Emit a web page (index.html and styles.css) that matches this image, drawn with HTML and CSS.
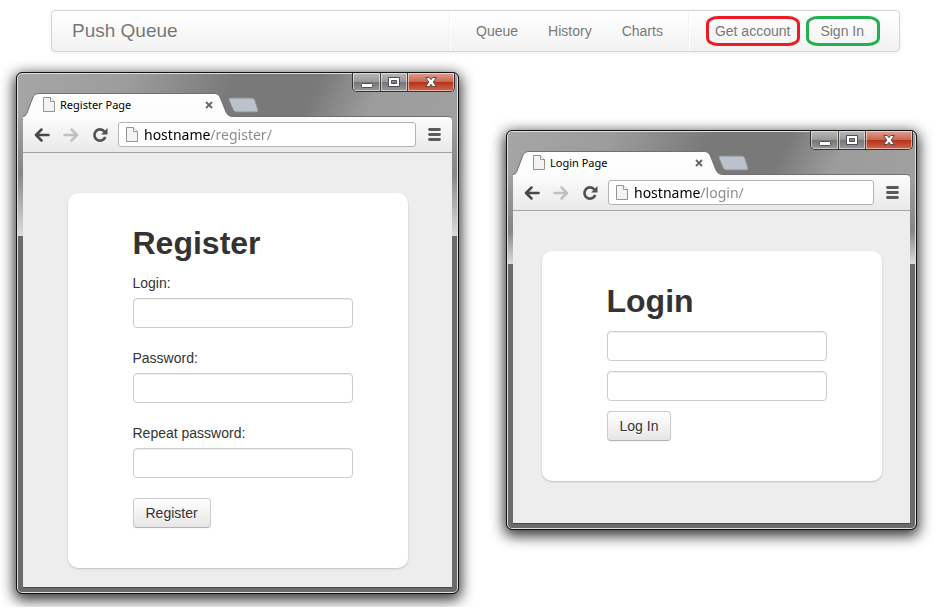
FILE: index.html
```html
<!DOCTYPE html>
<html lang="en">
<head>
<meta charset="utf-8">
<title>Push Queue</title>
<link rel="stylesheet" href="styles.css">
</head>
<body>
<svg class="defs" aria-hidden="true">
  <defs>
    <linearGradient id="tabFill" x1="0" y1="0" x2="0" y2="1"><stop offset="0" stop-color="#fff"/><stop offset="1" stop-color="#fcfcfc"/></linearGradient>
    <symbol id="doc" viewBox="0 0 12 15">
      <path d="M.5 .5H7.5L11.500 4.500V14.500H.5Z" fill="#f3f3f3" stroke="#949494"/>
      <path d="M7.500 .5V4.500H11.500" fill="#fff" stroke="#949494"/>
    </symbol>
    <symbol id="tab" viewBox="0 0 212 26">
      <path d="M0 26V24Q3 23 4 20L10 4Q11.500 .5 15 .5H192Q195.500 .5 197 4L203 19Q205 23.500 210 23.500H212V26Z" fill="url(#tabFill)"/>
      <path d="M0 23.500Q3 23 4 20L10 4Q11.500 .5 15 .5H192Q195.500 .5 197 4L203 19Q205 23.500 210 23.500H212" fill="none" stroke="#707070"/>
    </symbol>
    <symbol id="newtab" viewBox="0 0 32 16">
      <path d="M3 1H25Q27 1 28 3.500L31 13Q31.500 15 29.500 15H9Q7 15 6 12.500L2 3Q1.500 1 3 1Z" fill="#bcc2cb" stroke="#8b8e93"/>
    </symbol>
    <symbol id="cross" viewBox="0 0 8 8"><path d="M1 1L7 7M7 1L1 7" stroke="#666" stroke-width="1.800"/></symbol>
    <symbol id="arrow" viewBox="0 0 16 14"><path d="M7.500 1.500L2 7L7.500 12.500M2.500 7H14.500" fill="none" stroke="currentColor" stroke-width="2.500" stroke-linecap="round" stroke-linejoin="round"/></symbol>
    <symbol id="reload" viewBox="0 0 16 16">
      <path d="M12.400 4.500A5.600 5.600 0 1 0 13.300 10" fill="none" stroke="#525252" stroke-width="2.700"/>
      <path d="M15.500 1V7.500H9Z" fill="#525252"/>
    </symbol>
    <symbol id="bars" viewBox="0 0 13 13"><path d="M1.500 1.500H11.500M1.500 6.500H11.500M1.500 11.500H11.500" stroke="#5a5a5a" stroke-width="2.800" stroke-linecap="round"/></symbol>
    <symbol id="min" viewBox="0 0 12 11"><rect x=".5" y="6.500" width="11" height="4" rx="1" fill="#fff" stroke="#4b4e61"/></symbol>
    <symbol id="max" viewBox="0 0 12 11"><path fill-rule="evenodd" d="M.5 .5H11.500V9.500H.5ZM3.500 3.500V6.500H8.500V3.500Z" fill="#fff" stroke="#4b4e61"/></symbol>
    <symbol id="close" viewBox="0 0 12 11"><path d="M.7 .5H4.300L6 2.700L7.700 .5H11.300L8.200 5L11.300 9.500H7.700L6 7.300L4.300 9.500H.7L3.800 5Z" fill="#fff" stroke="#5a4a55"/></symbol>
  </defs>
</svg>

<header class="navbar">
  <a class="brand" href="#">Push Queue</a>
  <nav class="nav">
    <a href="#">Queue</a>
    <a href="#">History</a>
    <a href="#">Charts</a>
  </nav>
  <nav class="nav">
    <a class="ring ring-red" href="#register">Get account</a>
    <a class="ring ring-green" href="#login">Sign In</a>
  </nav>
</header>

<main class="desktop">
  <section class="window" id="register">
    <div class="titlebar">
      <div class="tab">
        <svg class="tab-shape"><use href="#tab"/></svg>
        <svg class="doc"><use href="#doc"/></svg>
        <span class="tab-title">Register Page</span>
        <button class="icon-button" type="button" aria-label="Close tab"><svg class="cross"><use href="#cross"/></svg></button>
      </div>
      <button class="icon-button newtab" type="button" aria-label="New tab"><svg><use href="#newtab"/></svg></button>
      <div class="controls">
        <button type="button" aria-label="Minimize"><svg><use href="#min"/></svg></button>
        <button type="button" aria-label="Maximize"><svg><use href="#max"/></svg></button>
        <button class="close" type="button" aria-label="Close"><svg><use href="#close"/></svg></button>
      </div>
    </div>
    <div class="toolbar">
      <button class="icon-button" type="button" aria-label="Back"><svg class="arrow"><use href="#arrow"/></svg></button>
      <button class="icon-button" type="button" aria-label="Forward"><svg class="arrow forward"><use href="#arrow"/></svg></button>
      <button class="icon-button" type="button" aria-label="Reload"><svg class="reload"><use href="#reload"/></svg></button>
      <div class="address">
        <svg class="doc"><use href="#doc"/></svg>
        <input type="text" aria-label="Address" value="hostname/register/">
      </div>
      <button class="icon-button" type="button" aria-label="Menu"><svg class="bars"><use href="#bars"/></svg></button>
    </div>
    <div class="page">
      <form class="card labelled">
        <h2>Register</h2>
        <label for="reg-login">Login:</label>
        <input id="reg-login" type="text">
        <label for="reg-pass">Password:</label>
        <input id="reg-pass" type="password">
        <label for="reg-repeat">Repeat password:</label>
        <input id="reg-repeat" type="password">
        <button type="button">Register</button>
      </form>
    </div>
  </section>

  <section class="window window-login" id="login">
    <div class="titlebar">
      <div class="tab">
        <svg class="tab-shape"><use href="#tab"/></svg>
        <svg class="doc"><use href="#doc"/></svg>
        <span class="tab-title">Login Page</span>
        <button class="icon-button" type="button" aria-label="Close tab"><svg class="cross"><use href="#cross"/></svg></button>
      </div>
      <button class="icon-button newtab" type="button" aria-label="New tab"><svg><use href="#newtab"/></svg></button>
      <div class="controls">
        <button type="button" aria-label="Minimize"><svg><use href="#min"/></svg></button>
        <button type="button" aria-label="Maximize"><svg><use href="#max"/></svg></button>
        <button class="close" type="button" aria-label="Close"><svg><use href="#close"/></svg></button>
      </div>
    </div>
    <div class="toolbar">
      <button class="icon-button" type="button" aria-label="Back"><svg class="arrow"><use href="#arrow"/></svg></button>
      <button class="icon-button" type="button" aria-label="Forward"><svg class="arrow forward"><use href="#arrow"/></svg></button>
      <button class="icon-button" type="button" aria-label="Reload"><svg class="reload"><use href="#reload"/></svg></button>
      <div class="address">
        <svg class="doc"><use href="#doc"/></svg>
        <input type="text" aria-label="Address" value="hostname/login/">
      </div>
      <button class="icon-button" type="button" aria-label="Menu"><svg class="bars"><use href="#bars"/></svg></button>
    </div>
    <div class="page">
      <form class="card">
        <h2>Login</h2>
        <input type="text" aria-label="Login">
        <input type="password" aria-label="Password">
        <button type="button">Log In</button>
      </form>
    </div>
  </section>
</main>
</body>
</html>
```
FILE: styles.css
```css
* { box-sizing: border-box; }

body {
  margin: 0;
  background: #fff;
  color: #333;
  font: 14px/20px "Liberation Sans", Arial, sans-serif;
}

svg { display: block; }
.defs { position: absolute; width: 0; height: 0; }

/* Navigation bar */
.navbar {
  display: flex;
  margin: 10px 50px 0 51px;
  padding: 0 20px;
  border: 1px solid #d4d4d4;
  border-radius: 4px;
  background: linear-gradient(#fff, #f2f2f2);
  box-shadow: 0 1px 4px rgba(0, 0, 0, .067);
}
.navbar a {
  color: #777;
  text-decoration: none;
  text-shadow: 0 1px 0 #fff;
}
.navbar .brand {
  margin-right: auto;
  padding: 10px 0;
  font-size: 19px;
}
.nav {
  display: flex;
  padding-left: 11px;
  border-left: 1px solid #f2f2f2;
  box-shadow: inset 1px 0 #fff;
}
.nav:last-child { margin-left: 10px; }
.nav a {
  position: relative;
  padding: 10px 15px;
}
.ring::after {
  content: "";
  position: absolute;
  top: 5px;
  bottom: 5px;
  border: 3px solid;
  border-radius: 12px / 8px;
}
.ring-red::after { left: 6px; right: 5px; border-color: #ed1c24; }
.ring-green::after { left: 1px; right: -1px; border-color: #22b14c; }

/* Browser windows */
.desktop {
  display: grid;
  grid-template-columns: 443fr 411fr;
  align-items: start;
  gap: 47px;
  padding: 20px 33px 13px 16px;
  overflow: hidden;
}
.window {
  --glass: 163px;
  padding: 0 6px 6px;
  border: 1px solid #111;
  border-radius: 6px;
  background:
    linear-gradient(115deg, #a6a6a6, #9c9c9c 25%, #797979 48%, #797979 66%, #9c9c9c 80%, #a0a0a0) 0 0 / 100% 45px no-repeat,
    linear-gradient(#a0a0a0 45px, #858585 100px, #dcdcdc) 0 0 / 100% var(--glass) no-repeat,
    #6b6b6b;
  box-shadow: inset 0 0 0 1px #dedede, 0 4px 14px 2px rgba(0, 0, 0, .8);
}
.window-login { --glass: 133px; margin-top: 58px; }

.titlebar {
  display: flex;
  align-items: flex-end;
  height: 43px;
}
.tab {
  position: relative;
  display: flex;
  align-items: center;
  width: 206px;
  height: 23px;
  padding: 0 16px 0 20px;
}
.tab-shape {
  position: absolute;
  left: 0;
  top: 0;
  z-index: 1;
  width: 212px;
  height: 26px;
}
.tab > :not(.tab-shape) { position: relative; z-index: 2; }
.doc { flex: none; width: 12px; height: 15px; }
.tab-title {
  flex: 1;
  margin-left: 5px;
  color: #000;
  font: 11px/16px "Noto Sans", "Open Sans", sans-serif;
}
.cross { width: 8px; height: 8px; }
.icon-button {
  flex: none;
  padding: 0;
  border: 0;
  background: none;
}
.newtab { margin: 0 0 3px -2px; }
.newtab svg { width: 32px; height: 16px; }

.controls {
  display: flex;
  align-self: flex-start;
  margin: 0 -3px 0 auto;
  border: 1px solid #333;
  border-top: 0;
  border-radius: 0 0 5px 5px;
  overflow: hidden;
}
.controls button {
  display: flex;
  justify-content: center;
  align-items: center;
  width: 28px;
  height: 18px;
  padding: 0;
  border: 0;
  border-right: 1px solid #444;
  background: linear-gradient(#b8b8b8, #999 48%, #757575 50%, #999);
  box-shadow: inset 0 0 0 1px rgba(255, 255, 255, .5);
}
.controls button + button { width: 27px; }
.controls .close:last-child {
  width: 46px;
  border-right: 0;
  background: linear-gradient(#dda092, #cc6650 48%, #b4301a 50%, #d1674c);
}
.controls svg { width: 12px; height: 11px; }

.toolbar {
  display: flex;
  align-items: center;
  height: 37px;
  padding: 0 11px;
  border-top: 1px solid #707070;
  border-bottom: 1px solid #a3a3a3;
  border-radius: 4px 4px 0 0;
  background: linear-gradient(#fcfcfc, #e9e9e9);
}
.toolbar .icon-button { margin-right: 13px; }
.toolbar .icon-button:last-child { margin: 0 0 0 12px; }
.arrow { width: 16px; height: 14px; color: #484848; }
.forward { color: #c0c0c0; transform: scaleX(-1); }
.reload { width: 16px; height: 16px; }
.bars { width: 13px; height: 13px; }
.address {
  display: flex;
  flex: 1;
  align-items: center;
  min-width: 0;
  height: 25px;
  margin-left: -3px;
  padding: 0 7px;
  border: 1px solid #b4b4b4;
  border-radius: 3px;
  background: #fff;
}
.address input {
  flex: 1;
  min-width: 0;
  margin-left: 6px;
  padding: 0;
  border: 0;
  outline: 0;
  background: linear-gradient(90deg, #000 66px, #888 66px);
  background-clip: text;
  -webkit-background-clip: text;
  color: transparent;
  font: 14px/22px "Noto Sans", "Open Sans", sans-serif;
}

/* Pages inside the windows */
.page {
  padding: 40px 0 19px;
  background: #ededed;
  box-shadow: 0 1px #484848;
}
.window-login .page { padding-bottom: 42px; }
.card {
  display: flex;
  flex-direction: column;
  align-items: flex-start;
  gap: 10px;
  width: 340px;
  max-width: 100%;
  margin: 0 auto;
  padding: 30px 55px 40px 65px;
  border-radius: 10px;
  background: #fff;
  box-shadow: 0 1px 2px rgba(0, 0, 0, .2);
}
.card h2 {
  margin: 0;
  font-size: 32px;
  line-height: 40px;
}
.card input {
  width: 100%;
  height: 30px;
  padding: 4px 6px;
  border: 1px solid #ccc;
  border-radius: 4px;
  background: #fff;
  box-shadow: inset 0 1px 1px rgba(0, 0, 0, .075);
  font: inherit;
}
.labelled { gap: 0; }
.labelled h2 { margin-bottom: 10px; }
.labelled label { margin-bottom: 5px; }
.labelled input { margin-bottom: 20px; }
.card button {
  height: 30px;
  padding: 4px 12px;
  border: 1px solid #ccc;
  border-bottom-color: #b3b3b3;
  border-radius: 4px;
  background: linear-gradient(#fff, #e6e6e6);
  box-shadow: 0 1px 2px rgba(0, 0, 0, .05);
  color: #333;
  font: inherit;
  text-shadow: 0 1px 1px rgba(255, 255, 255, .75);
}
```
